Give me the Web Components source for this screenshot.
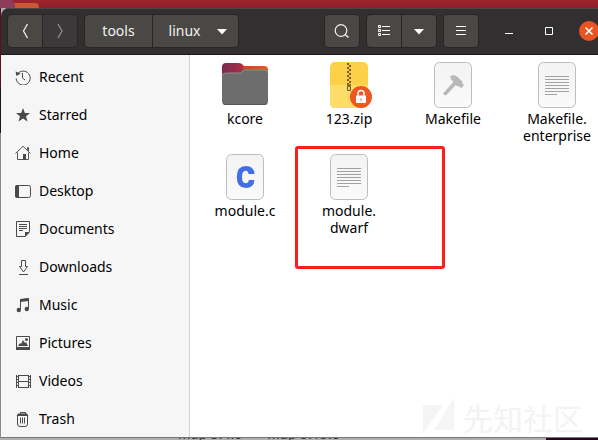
<!DOCTYPE html>
<html lang="en">
<head>
<meta charset="utf-8">
<title>linux</title>
<style>
html{height:100%}
body{margin:0;height:100%;overflow:hidden;font:14px/18px "Noto Sans","Noto Sans CJK SC",sans-serif;color:#000}
</style>
</head>
<body>
<desk-top>
  <file-window>
    <head-bar slot="header"></head-bar>
    <side-bar slot="sidebar">
      <place-link icon="recent">Recent</place-link>
      <place-link icon="star">Starred</place-link>
      <place-link icon="home">Home</place-link>
      <place-link icon="desktop">Desktop</place-link>
      <place-link icon="documents">Documents</place-link>
      <place-link icon="downloads">Downloads</place-link>
      <place-link icon="music">Music</place-link>
      <place-link icon="pictures">Pictures</place-link>
      <place-link icon="videos">Videos</place-link>
      <place-link icon="trash">Trash</place-link>
    </side-bar>
    <file-grid>
      <file-item icon="folder">kcore</file-item>
      <file-item icon="zip">123.zip</file-item>
      <file-item icon="make">Makefile</file-item>
      <file-item icon="text">Makefile.<br>enterprise</file-item>
      <file-item icon="c">module.c</file-item>
      <file-item icon="text">module.<br>dwarf</file-item>
    </file-grid>
  </file-window>
</desk-top>
<script>
const page = (l) => `<defs><linearGradient id="pg" x2="0" y2="1"><stop stop-color="#f3f3f3"/><stop offset="1" stop-color="#fafafa"/></linearGradient></defs><rect x="5.500" y="1.500" width="37" height="45" rx="5" fill="url(#pg)" stroke="#bdbdbd"/>${l}`;
const lines = page('<path d="M12 15.500h24M12 18.500h24M12 21.500h24M12 24.500h24M12 27.500h24M12 30.500h24M12 33.500h12" stroke="#a2a2a2"/>');
const ICONS = {
  recent:'<path d="M2.300 5.300A7 7 0 1 1 1.200 9.500" fill="none" stroke="#4a4a4a"/><path d="M.5 2.500l1 4.500 4.200-2.500z" fill="#4a4a4a"/><path d="M7.500 4v5l2.500 2" fill="none" stroke="#4a4a4a"/>',
  star:'<path d="M8 1l1.900 4.900 5.100.1-4 3.300 1.500 5.200L8 11.600l-4.500 2.900L5 9.300 1 6l5.100-.1z" fill="#4a4a4a"/>',
  home:'<path d="M.5 8.500L8 1.200l7.500 7.300M2.500 7.500v7h11v-7M12.500 5V2.500h1v3.500" fill="none" stroke="#555"/><path d="M8 9h3v6H8z" fill="#4a4a4a"/>',
  desktop:'<rect x=".5" y="2.500" width="15" height="12" rx="2" fill="none" stroke="#4a4a4a"/><path d="M2 2h2v13H2q-2 0-2-2V4q0-2 2-2z" fill="#4a4a4a"/>',
  documents:'<path d="M1.500.5h13v10l-4.500 5H1.500z" fill="none" stroke="#4a4a4a"/><path d="M10 11h5l-5 5zM4 3h8v1H4zM4 5h8v1H4zM4 7h8v1H4zM4 9h4v1H4z" fill="#4a4a4a"/>',
  downloads:'<path d="M6.500 1.500h4v6h2L8.500 13l-4-5.500h2zM4 15.500h9" fill="none" stroke="#4a4a4a"/>',
  music:'<path d="M5.500 12.500V3l8-1.500V11" fill="none" stroke="#4a4a4a"/><path d="M5 2l9-1v3L5 5z" fill="#4a4a4a"/><circle cx="3.800" cy="13" r="2.200" fill="#4a4a4a"/><circle cx="11.800" cy="12" r="2.200" fill="#4a4a4a"/>',
  pictures:'<path d="M1.500 1.500h13v12h-13z" fill="none" stroke="#4a4a4a"/><path d="M1 12h14v3H1zM3 11l2-3 1 1 2-4 2 3 1-1 2 4z" fill="#4a4a4a"/><circle cx="11.500" cy="4.500" r="1.500" fill="#4a4a4a"/>',
  videos:'<path d="M3.500 2v13M13.500 2v13M3.500 2.500h10M3.500 8.500h10M3.500 14.500h10" stroke="#4a4a4a"/><path d="M1 2h1v13H1zM15 2h1v13h-1z" fill="#4a4a4a"/><path d="M2 3.500h1M2 6.500h1M2 9.500h1M2 12.500h1M14 3.500h1M14 6.500h1M14 9.500h1M14 12.500h1" stroke="#4a4a4a"/>',
  trash:'<path d="M5.500 3V1.500h5V3M2.500 5v8q0 2.500 2.500 2.500h5q2.500 0 2.500-2.500V5" fill="none" stroke="#4a4a4a"/><path d="M3 2.500h9l1.500 2.500H1.500zM5 6.500h1v6H5zM7 6.500h1v6H7zM9 6.500h1v6H9z" fill="#4a4a4a"/>',
  back:'<path d="M10.500 1L6.500 8l4 7" fill="none" stroke="#eee" stroke-width="1.300"/>',
  forward:'<path d="M6 1l4 7-4 7" fill="none" stroke="#8c8c8c" stroke-width="1.300"/>',
  down:'<path d="M3 6h10l-5 5.500z" fill="#fff"/>',
  search:'<circle cx="7" cy="7.500" r="5.800" fill="none" stroke="#eee" stroke-width="1.200"/><path d="M11 11.500l3.500 3" stroke="#eee" stroke-width="1.500"/>',
  list:'<path d="M2.500 2.500h2v2h-2zM2.500 6.500h2v2h-2zM2.500 10.500h2v2h-2zM6 3.500h8M6 7.500h8M6 11.500h8" fill="none" stroke="#fff"/>',
  menu:'<path d="M3 3.500h10M3 7.500h10M3 11.500h10" stroke="#fff"/>',
  min:'<path d="M4 10.500h8" stroke="#fff"/>',
  max:'<path d="M4.500 4.500h7v7h-7z" fill="none" stroke="#fff"/>',
  folder:'<defs><linearGradient id="f"><stop stop-color="#792b50"/><stop offset=".4" stop-color="#a22e49"/><stop offset=".5" stop-color="#cc4926"/><stop offset="1" stop-color="#e45a25"/></linearGradient></defs><path d="M1 6q0-4 4-4h13q3 0 5 3h20q4 0 4 4v12H1z" fill="url(#f)"/><path d="M1 16q0-4 4-4h12q3 0 4-1l2-2h20q4 0 4 4v27q0 4-4 4H5q-4 0-4-4z" fill="#6d6d6d"/><path d="M1 15q0-3 4-3h12q3 0 4-1l2-2h20q4 0 4 4" fill="none" stroke="#8f8b88"/><path d="M2 42.500q1 1 3 1h38q2 0 3-1" fill="none" stroke="#555"/>',
  zip:'<rect x="5" y="1" width="38" height="46" rx="5" fill="#fcd147"/><path d="M5 24h38v18q0 5-5 5H10q-5 0-5-5z" fill="#fddc68"/><path d="M23 2v21M25 4v19" stroke="#7b5a24" stroke-width="2" stroke-dasharray="2 2"/><path d="M22.500 23.500h3v6h-3z" fill="#e8cc78" stroke="#7b5a24"/><path d="M22 23h4v3h-4z" fill="#8b6a34"/><circle cx="36" cy="36" r="11" fill="#ee5622"/><rect x="31" y="34.500" width="10" height="7.500" rx="1" fill="#fff"/><path d="M33 35v-2.500a3 3 0 0 1 6 0V35" fill="none" stroke="#fff" stroke-width="1.500"/><path d="M35.500 37.500h1v2h-1z" fill="#e95420"/>',
  make:page('<path d="M14 32.500L24.500 21l-2.800-2.700q1.300-1 .3-1.300-.5-.5-1.500-1.300 4-2.700 7.500-.2l5.300 5v2l1.800 1.500-2.800 3.200-2.300-2-1.200.2-2-1.500L17.500 34q-2.300 1-3.500-1.500z" fill="#b8b8b8"/>'),
  text:lines,
  c:page('<path d="M33.500 21h-6q-.4-3.200-2.700-3.200-3.800 0-3.800 6.200t3.800 6.200q2.700 0 3-3.200h5.700q-.7 8-8.700 8-9 0-9-11t9-11q8.200 0 8.700 8z" fill="#446fe4"/>')
};
const svg = (name, size) => `<svg width="${size}" height="${size}" viewBox="0 0 ${size} ${size}" aria-hidden="true">${ICONS[name]}</svg>`;
function define(name, render) {
  customElements.define(name, class extends HTMLElement {
    connectedCallback() {
      if (this.shadowRoot) return;
      this.attachShadow({mode: 'open'}).innerHTML = render(this);
    }
  });
}

define('desk-top', () => `<style>
:host{display:flex;flex-direction:column;height:100%;position:relative;overflow:hidden;box-sizing:border-box;padding:8px 0 2px 1px;background:linear-gradient(#a0252c,#8d1f2c) 0 0/100% 8px no-repeat,linear-gradient(#5c1018,#5c1018) 0 0/1px 87px no-repeat,linear-gradient(#1b1719,#1b1719) 0 87px/1px 46px no-repeat,linear-gradient(#8a8a8a,#8a8a8a) 0 133px/1px 305px no-repeat,linear-gradient(90deg,#afafaf 546px,#26031f 546px)}
.peek{position:absolute;left:0;top:0}
.under{position:absolute;left:178px;top:425px;display:flex;gap:25px;line-height:17px;color:#333;white-space:pre}
</style>
<svg class="peek" width="40" height="8" aria-hidden="true"><path d="M0 3h35q4 0 4 5H0z" fill="#cc5934"/><path d="M0 0h12l3 4v4H0z" fill="#8d3c5b"/></svg>
<div class="under"><span>Map 5.4.0</span><span>Map 5.15.0</span></div><slot></slot>`);

define('file-window', () => `<style>
:host{display:flex;flex-direction:column;flex:1;min-height:0;margin-right:-12px;position:relative;background:#fff;border-radius:8px 0 0 0;overflow:hidden;border-bottom:1px solid #777;box-sizing:border-box}
.body{display:flex;flex:1;min-height:0}
main{flex:1;min-width:0}
.mark{position:absolute;right:27px;bottom:1px;display:flex;align-items:center;gap:8px;font:30px/36px "Noto Sans CJK SC",sans-serif;color:#f3f3f3}
</style><slot name="header"></slot><div class="body"><slot name="sidebar"></slot><main><slot></slot></main></div>
<div class="mark"><svg width="32" height="38" viewBox="0 0 32 38" aria-hidden="true"><path d="M0 7h20L0 36zM31 0v32H11z" fill="#f5f5f5"/></svg><span>先知社区</span></div>`);

define('head-bar', () => `<style>
:host{display:flex;align-items:center;height:47px;box-sizing:border-box;padding:0 1px 1px 6px;background:#322f30;border-top:1px solid #494647;border-bottom:1px solid #1c1a1b;color:#f2f2f2;flex:none}
.group{display:flex;border:1px solid #282526;border-radius:5px;overflow:hidden;background:#282526;gap:1px;margin-right:6px}
button{display:flex;align-items:center;justify-content:center;width:34px;height:32px;padding:0;border:0;background:#494845;color:inherit;font:inherit}
button[disabled]{background:#3b3939}
button.tools{width:67px}
button.linux{width:85px;gap:14px;padding-left:8px}
.space{flex:1}
.controls{display:flex;margin-left:4px}
.controls button{width:40px;background:none}
.close span{display:flex;width:20px;height:20px;border-radius:50%;background:#e95420;align-items:center;justify-content:center}
</style>
<div class="group"><button aria-label="Back">${svg('back',16)}</button><button disabled aria-label="Forward">${svg('forward',16)}</button></div>
<div class="group"><button class="tools">tools</button><button class="linux">linux ${svg('down',16)}</button></div>
<div class="space"></div>
<div class="group"><button aria-label="Search">${svg('search',16)}</button></div>
<div class="group"><button aria-label="List view">${svg('list',16)}</button><button aria-label="View options">${svg('down',16)}</button></div>
<div class="group"><button aria-label="Menu">${svg('menu',16)}</button></div>
<div class="controls"><button aria-label="Minimize">${svg('min',16)}</button><button aria-label="Maximize">${svg('max',16)}</button><button class="close" aria-label="Close"><span><svg width="10" height="10" aria-hidden="true"><path d="M1.500 1.500l7 7M8.500 1.500l-7 7" stroke="#fff" stroke-width="1.600"/></svg></span></button></div>`);

define('side-bar', () => `<style>
:host{display:block;flex:none;width:188px;padding-top:3px;background:#f6f6f6;border-right:1px solid #d3d3d3;overflow:hidden}
</style><nav><slot></slot></nav>`);

define('place-link', el => `<style>
:host{display:block}
a{display:flex;align-items:center;gap:8px;height:38px;padding-left:14px;color:inherit;text-decoration:none}
</style><a href="#">${svg(el.getAttribute('icon'),16)}<slot></slot></a>`);

define('file-grid', () => `<style>
:host{display:grid;grid-template-columns:repeat(auto-fill,104px);grid-auto-rows:92px;padding:6px 0 0 3px;position:relative}
.box{position:absolute;left:105px;top:91px;width:150px;height:123px;box-sizing:border-box;border:3px solid #fa2019;border-radius:3px}
</style><slot></slot><div class="box"></div>`);

define('file-item', el => `<style>
:host{display:block}
a{display:flex;flex-direction:column;align-items:center;color:inherit;text-decoration:none;text-align:center;line-height:17px}
svg{display:block}
span{margin-top:1px}
</style><a href="#">${svg(el.getAttribute('icon'),48)}<span><slot></slot></span></a>`);
</script>
</body>
</html>
